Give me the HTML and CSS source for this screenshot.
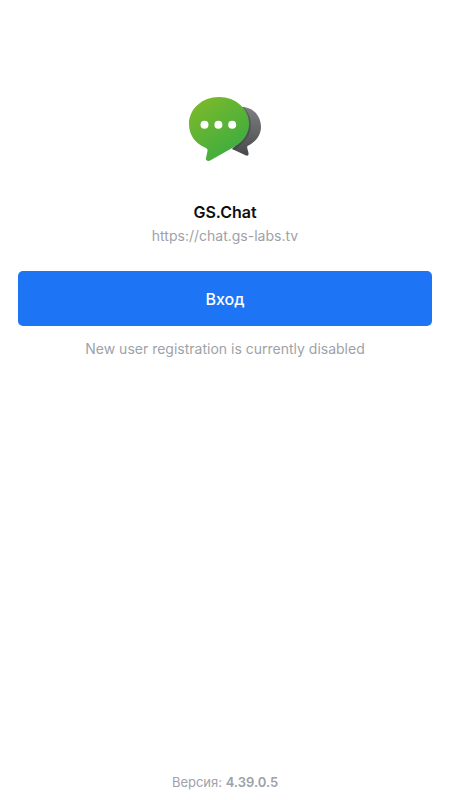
FILE: index.html
```html
<!DOCTYPE html>
<html lang="ru">
<head>
<meta charset="utf-8">
<meta name="viewport" content="width=device-width, initial-scale=1">
<title>GS.Chat</title>
<link rel="stylesheet" href="styles.css">
</head>
<body>
<main class="screen">
  <svg class="logo" viewBox="0 0 74 66" aria-hidden="true">
    <defs>
      <linearGradient id="green" x1="0.1" y1="0" x2="0.8" y2="1">
        <stop offset="0" stop-color="#7fba2a"/>
        <stop offset="1" stop-color="#37ab42"/>
      </linearGradient>
      <linearGradient id="gray" x1="0" y1="0" x2="0" y2="1">
        <stop offset="0" stop-color="#7e8083"/>
        <stop offset="1" stop-color="#47484a"/>
      </linearGradient>
      <clipPath id="back"><path d="M52 11C65 10 73 20 73 31C73 40 67 46 59.500 50C58.500 51 60 54 60.500 57C61 60 59 60.500 57 59L44 53C52 45 60 36 60 25C60 19 56 14 52 11Z"/></clipPath>
    </defs>
    <g clip-path="url(#back)">
      <path fill="url(#gray)" d="M40 10H74V61H40Z"/>
      <path fill="#333" fill-opacity=".35" d="M30 1C50 1 63 14 63 29C63 39 57 46 44 56Z"/>
    </g>
    <path fill="url(#green)" d="M31 1C48 1 61 13 61 28C61 38 55 46 46 51L23 64C20 66 17.500 64.500 18 62L19.500 55C19.800 53 19 52.500 17 51.500C7 47 1 39 1 28C1 13 14 1 31 1Z"/>
    <g fill="#fff"><circle cx="16.500" cy="28.700" r="4"/><circle cx="30.400" cy="28.700" r="4"/><circle cx="44.200" cy="28.700" r="4"/></g>
  </svg>
  <h1 class="title">GS.Chat</h1>
  <p class="server">https://chat.gs-labs.tv</p>
  <button class="login" type="button">Вход</button>
  <p class="notice">New user registration is currently disabled</p>
  <footer class="version">Версия: <strong>4.39.0.5</strong></footer>
</main>
</body>
</html>
```
FILE: styles.css
```css
* { box-sizing: border-box; }
body { margin: 0; background: #fff; font-family: Inter, sans-serif; color: #9ea2a8; }
.screen { display: flex; flex-direction: column; align-items: center; min-height: 100vh; padding: 96px 18px 8px; text-align: center; }
.logo { width: 74px; height: 66px; }
.title { margin: 38px 0 0; font-size: 16px; line-height: 24px; font-weight: 600; color: #0d0e12; }
.server { margin: 0; font-size: 14px; line-height: 24px; }
.login { width: 100%; min-height: 55px; margin: 23px 0 11px; padding: 0 16px; border: 0; border-radius: 5px; background: #1d74f5; color: #fff; font: 500 16px/24px Inter, sans-serif; }
.notice { margin: 0; font-size: 14px; line-height: 24px; }
.version { margin-top: auto; font-size: 13px; line-height: 20px; }
.version strong { font-weight: 600; }
```
